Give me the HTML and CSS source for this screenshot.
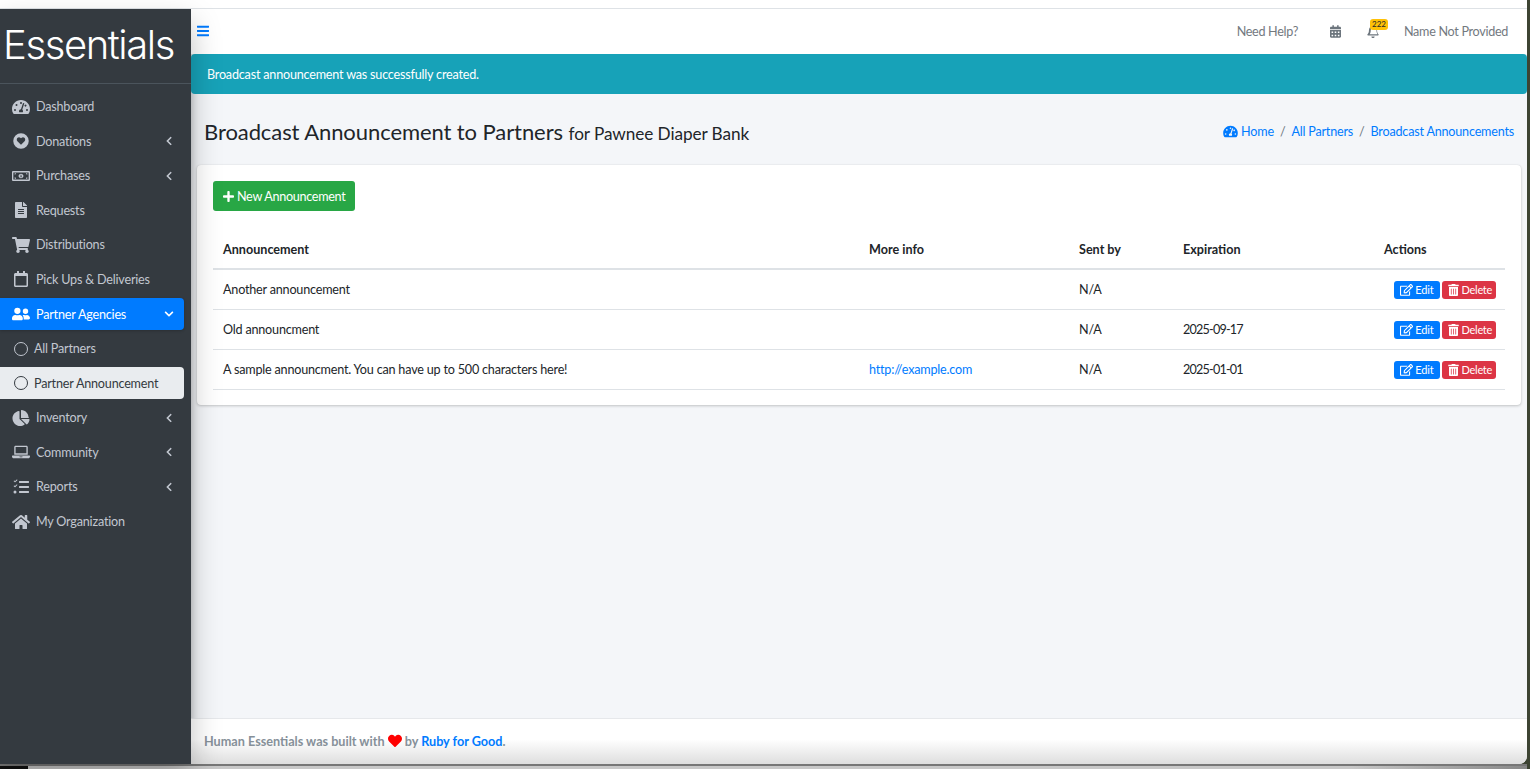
FILE: index.html
```html
<!DOCTYPE html>
<html lang="en">

<head>
  <meta charset="UTF-8">
  <title>Broadcast Announcements</title>
  <link rel="stylesheet" href="styles.css">
</head>

<body>
  <svg class="icon-defs" xmlns="http://www.w3.org/2000/svg">
    <symbol id="i-gauge" viewBox="0 0 576 512"><path d="M288 32C129 32 0 161 0 320c0 53 14 102 39 145 6 10 16 15 28 15h442c12 0 22-5 28-15 25-43 39-92 39-145C576 161 447 32 288 32zm0 64a32 32 0 1 1 0 64 32 32 0 0 1 0-64zM96 384a32 32 0 1 1 0-64 32 32 0 0 1 0 64zm48-160a32 32 0 1 1 0-64 32 32 0 0 1 0 64zm246-70-61 184c14 12 23 30 23 50 0 11-3 22-8 32H232c-5-10-8-21-8-32 0-35 29-64 63-64l61-184c4-12 17-18 29-14s19 16 15 28zm14 70a32 32 0 0 1 28-48 32 32 0 1 1-28 48zm76 160a32 32 0 1 1 0-64 32 32 0 0 1 0 64z" /></symbol>
    <symbol id="i-heart-circle" viewBox="0 0 512 512"><path fill-rule="evenodd" d="M256 8a248 248 0 1 0 0 496 248 248 0 0 0 0-496zm114 253L266 368c-6 6-15 6-20 0L142 261c-30-31-28-82 5-111 29-25 72-20 98 7l11 11 11-11c26-27 69-32 98-7 33 29 35 80 5 111z" /></symbol>
    <symbol id="i-money" viewBox="0 0 640 512"><path fill-rule="evenodd" d="M32 80h576c18 0 32 14 32 32v288c0 18-14 32-32 32H32c-18 0-32-14-32-32V112c0-18 14-32 32-32zm16 48v256h544V128H48zM320 176c50 0 88 36 88 80s-38 80-88 80-88-36-88-80 38-80 88-80zm-22 32v20h10v46h-14v22h56v-22h-14v-66zM96 160h48c0 26-22 48-48 48zm448 0v48c-26 0-48-22-48-48zM96 352v-48c26 0 48 22 48 48zm448 0h-48c0-26 22-48 48-48z" /></symbol>
    <symbol id="i-file" viewBox="0 0 384 512"><path fill-rule="evenodd" d="M224 136V0H24C11 0 0 11 0 24v464c0 13 11 24 24 24h336c13 0 24-11 24-24V160H248c-13 0-24-11-24-24zm64 236c0 7-5 12-12 12H108c-7 0-12-5-12-12v-8c0-7 5-12 12-12h168c7 0 12 5 12 12v8zm0-64c0 7-5 12-12 12H108c-7 0-12-5-12-12v-8c0-7 5-12 12-12h168c7 0 12 5 12 12v8zm0-72v8c0 7-5 12-12 12H108c-7 0-12-5-12-12v-8c0-7 5-12 12-12h168c7 0 12 5 12 12zm96-114v6H256V0h6c6 0 12 3 17 7l98 98c4 5 7 11 7 17z" /></symbol>
    <symbol id="i-cart" viewBox="0 0 576 512"><path d="M528.12 301.319l47.273-208C578.806 78.301 567.391 64 551.99 64H159.208l-9.166-44.81C147.758 8.021 137.93 0 126.529 0H24C10.745 0 0 10.745 0 24v16c0 13.255 10.745 24 24 24h69.883l70.248 343.435C147.325 417.1 136 435.222 136 456c0 30.928 25.072 56 56 56s56-25.072 56-56c0-15.674-6.447-29.835-16.824-40h209.647C430.447 426.165 424 440.326 424 456c0 30.928 25.072 56 56 56s56-25.072 56-56c0-22.172-12.888-41.332-31.579-50.405l5.517-24.276c3.413-15.018-8.002-29.319-23.403-29.319H218.117l-6.545-32h293.145c11.206 0 20.92-7.754 23.403-18.681z" /></symbol>
    <symbol id="i-calendar-o" viewBox="0 0 448 512"><path fill-rule="evenodd" d="M400 64h-48V12c0-7-5-12-12-12h-40c-7 0-12 5-12 12v52H160V12c0-7-5-12-12-12h-40c-7 0-12 5-12 12v52H48C21 64 0 85 0 112v352c0 27 21 48 48 48h352c27 0 48-21 48-48V112c0-27-21-48-48-48zm-6 400H54c-3 0-6-3-6-6V160h352v298c0 3-3 6-6 6z" /></symbol>
    <symbol id="i-users" viewBox="0 0 640 512"><path d="M192 256a112 112 0 1 0 0-224 112 112 0 0 0 0 224zm77 32h-8c-21 10-44 16-69 16s-48-6-69-16h-8C51 288 0 340 0 403v29c0 27 21 48 48 48h288c27 0 48-21 48-48v-29c0-63-51-115-115-115zm211-32a96 96 0 1 0 0-192 96 96 0 0 0 0 192zm48 32h-4c-14 5-29 8-44 8s-30-3-44-8h-4c-20 0-39 6-55 16 24 26 39 60 39 99v38c0 2 0 4-1 7h177c27 0 48-21 48-48 0-62-50-112-112-112z" /></symbol>
    <symbol id="i-pie" viewBox="0 0 544 512"><path d="M528 288H274l169 169c6 6 17 7 24 1 41-39 70-91 78-149 1-11-7-21-17-21zm-17-65C503 102 410 9 289 1c-9-1-17 7-17 16v239h239c9 0 17-8 16-17zM224 288V50c0-10-9-18-18-17C86 50-6 155 0 279c6 128 117 233 245 233 50 0 97-16 135-44 8-6 9-18 2-25z" /></symbol>
    <symbol id="i-laptop" viewBox="0 0 640 512"><path fill-rule="evenodd" d="M128 32h384c27 0 48 21 48 48v272H80V80c0-27 21-48 48-48zm0 48v224h384V80H128zM16 384h608c9 0 16 7 16 16v16c0 35-29 64-64 64H64c-35 0-64-29-64-64v-16c0-9 7-16 16-16zm248 32 12 24h88l12-24H264z" /></symbol>
    <symbol id="i-tasks" viewBox="0 0 512 512"><path d="M139 25l-10-10c-3-3-8-3-11 0L64 68 45 50c-3-3-8-3-11 0L23 61c-3 3-3 8 0 11l36 35c3 3 8 3 11 0l69-71c3-3 3-8 0-11zm0 159-10-10c-3-3-8-3-11 0l-54 53-19-18c-3-3-8-3-11 0l-11 11c-3 3-3 8 0 11l36 35c3 3 8 3 11 0l69-71c3-3 3-8 0-11zM64 368a48 48 0 1 0 0 96 48 48 0 0 0 0-96zm432 16H208c-9 0-16 7-16 16v32c0 9 7 16 16 16h288c9 0 16-7 16-16v-32c0-9-7-16-16-16zm0-320H208c-9 0-16 7-16 16v32c0 9 7 16 16 16h288c9 0 16-7 16-16V80c0-9-7-16-16-16zm0 160H208c-9 0-16 7-16 16v32c0 9 7 16 16 16h288c9 0 16-7 16-16v-32c0-9-7-16-16-16z" /></symbol>
    <symbol id="i-home" viewBox="0 0 576 512"><path d="M280.37 148.26L96 300.11V464a16 16 0 0 0 16 16l112.06-.29a16 16 0 0 0 15.92-16V368a16 16 0 0 1 16-16h64a16 16 0 0 1 16 16v95.64a16 16 0 0 0 16 16.05L464 480a16 16 0 0 0 16-16V300L295.67 148.26a12.19 12.19 0 0 0-15.3 0zM571.6 251.47L488 182.56V44.05a12 12 0 0 0-12-12h-56a12 12 0 0 0-12 12v72.61L318.47 43a48 48 0 0 0-61 0L4.34 251.47a12 12 0 0 0-1.6 16.9l25.5 31A12 12 0 0 0 45.15 301l235.22-193.74a12.19 12.19 0 0 1 15.3 0L530.9 301a12 12 0 0 0 16.9-1.6l25.5-31a12 12 0 0 0-1.7-16.93z" /></symbol>
    <symbol id="i-chevron-left" viewBox="0 0 320 512"><path d="M34 239 228 45c9-9 25-9 34 0l23 23c9 9 9 24 0 34L131 256l154 154c9 10 9 25 0 34l-23 23c-9 9-25 9-34 0L34 273c-9-9-9-25 0-34z" /></symbol>
    <symbol id="i-chevron-down" viewBox="0 0 448 512"><path d="M207 381 12 187c-9-10-9-25 0-34l23-23c9-9 24-9 34 0l155 154 155-154c10-9 25-9 34 0l23 23c9 9 9 24 0 34L241 381c-9 9-25 9-34 0z" /></symbol>
    <symbol id="i-bars" viewBox="0 0 448 512"><path d="M16 132h416c9 0 16-7 16-16V76c0-9-7-16-16-16H16C7 60 0 67 0 76v40c0 9 7 16 16 16zm0 160h416c9 0 16-7 16-16v-40c0-9-7-16-16-16H16c-9 0-16 7-16 16v40c0 9 7 16 16 16zm0 160h416c9 0 16-7 16-16v-40c0-9-7-16-16-16H16c-9 0-16 7-16 16v40c0 9 7 16 16 16z" /></symbol>
    <symbol id="i-calendar" viewBox="0 0 448 512"><path fill-rule="evenodd" d="M0 464c0 27 21 48 48 48h352c27 0 48-21 48-48V192H0v272zm320-196c0-7 5-12 12-12h40c7 0 12 5 12 12v40c0 7-5 12-12 12h-40c-7 0-12-5-12-12v-40zm0 128c0-7 5-12 12-12h40c7 0 12 5 12 12v40c0 7-5 12-12 12h-40c-7 0-12-5-12-12v-40zM192 268c0-7 5-12 12-12h40c7 0 12 5 12 12v40c0 7-5 12-12 12h-40c-7 0-12-5-12-12v-40zm0 128c0-7 5-12 12-12h40c7 0 12 5 12 12v40c0 7-5 12-12 12h-40c-7 0-12-5-12-12v-40zM64 268c0-7 5-12 12-12h40c7 0 12 5 12 12v40c0 7-5 12-12 12H76c-7 0-12-5-12-12v-40zm0 128c0-7 5-12 12-12h40c7 0 12 5 12 12v40c0 7-5 12-12 12H76c-7 0-12-5-12-12v-40zM400 64h-48V16c0-9-7-16-16-16h-32c-9 0-16 7-16 16v48H160V16c0-9-7-16-16-16h-32c-9 0-16 7-16 16v48H48C21 64 0 85 0 112v48h448v-48c0-27-21-48-48-48z" /></symbol>
    <symbol id="i-bell" viewBox="0 0 448 512"><path fill-rule="evenodd" d="M224 512c35 0 64-29 64-64H160c0 35 29 64 64 64zm215-150c-19-21-55-52-55-154 0-78-54-140-128-155V32a32 32 0 1 0-64 0v21C118 68 64 130 64 208c0 102-36 133-55 154-6 6-9 13-9 22 0 16 13 32 32 32h384c19 0 32-16 32-32 0-9-3-16-9-22zm-348 6c21-28 45-74 45-159v-1c0-62 50-112 112-112s112 50 112 112v1c0 85 24 131 45 159H91z" /></symbol>
    <symbol id="i-plus" viewBox="0 0 448 512"><path d="M416 208H272V64c0-18-14-32-32-32h-32c-18 0-32 14-32 32v144H32c-18 0-32 14-32 32v32c0 18 14 32 32 32h144v144c0 18 14 32 32 32h32c18 0 32-14 32-32V304h144c18 0 32-14 32-32v-32c0-18-14-32-32-32z" /></symbol>
    <symbol id="i-edit" viewBox="0 0 576 512"><path d="M402 339l32-32c5-5 14-2 14 6v151c0 27-21 48-48 48H48c-27 0-48-21-48-48V112c0-27 21-48 48-48h273c7 0 11 9 6 14l-32 32c-2 2-4 2-6 2H48v352h352V345c0-2 1-4 2-6zm157-202L296 400l-90 10c-26 3-48-19-45-45l10-90L434 12c23-23 60-23 83 0l42 42c23 23 23 60 0 83zm-99 31-57-57-182 182-7 64 64-7 182-182zm65-80-42-42c-4-4-11-4-15 0l-30 30 57 57 30-30c4-4 4-11 0-15z" /></symbol>
    <symbol id="i-trash" viewBox="0 0 448 512"><path fill-rule="evenodd" d="M32 464c0 27 21 48 48 48h288c27 0 48-21 48-48V128H32v336zm272-256a16 16 0 0 1 32 0v224a16 16 0 0 1-32 0V208zm-96 0a16 16 0 0 1 32 0v224a16 16 0 0 1-32 0V208zm-96 0a16 16 0 0 1 32 0v224a16 16 0 0 1-32 0V208zM432 32H312l-9-19c-4-8-12-13-22-13H167c-9 0-18 5-22 13l-9 19H16C7 32 0 39 0 48v32c0 9 7 16 16 16h416c9 0 16-7 16-16V48c0-9-7-16-16-16z" /></symbol>
    <symbol id="i-heart" viewBox="0 0 512 512"><path d="M462.3 62.6C407.5 15.9 326 24.3 275.7 76.2L256 96.5l-19.7-20.3C186.1 24.3 104.5 15.9 49.7 62.6c-62.8 53.6-66.1 149.8-9.9 207.9l193.5 199.8c12.5 12.9 32.8 12.9 45.3 0l193.5-199.8c56.3-58.1 53-154.3-9.8-207.9z" /></symbol>
  </svg>

  <div class="top-strip"></div>

  <div class="wrapper">
    <aside class="sidebar">
      <a href="#" class="brand">Essentials</a>
      <nav class="side-nav">
        <a href="#" class="side-link"><svg class="side-icon"><use href="#i-gauge" /></svg>Dashboard</a>
        <a href="#" class="side-link"><svg class="side-icon"><use href="#i-heart-circle" /></svg>Donations<svg class="caret"><use href="#i-chevron-left" /></svg></a>
        <a href="#" class="side-link"><svg class="side-icon"><use href="#i-money" /></svg>Purchases<svg class="caret"><use href="#i-chevron-left" /></svg></a>
        <a href="#" class="side-link"><svg class="side-icon"><use href="#i-file" /></svg>Requests</a>
        <a href="#" class="side-link"><svg class="side-icon"><use href="#i-cart" /></svg>Distributions</a>
        <a href="#" class="side-link"><svg class="side-icon"><use href="#i-calendar-o" /></svg>Pick Ups &amp; Deliveries</a>
        <a href="#" class="side-link active"><svg class="side-icon"><use href="#i-users" /></svg>Partner Agencies<svg class="caret"><use href="#i-chevron-down" /></svg></a>
        <a href="#" class="side-link sub"><span class="ring"></span>All Partners</a>
        <a href="#" class="side-link sub current"><span class="ring"></span>Partner Announcement</a>
        <a href="#" class="side-link"><svg class="side-icon"><use href="#i-pie" /></svg>Inventory<svg class="caret"><use href="#i-chevron-left" /></svg></a>
        <a href="#" class="side-link"><svg class="side-icon"><use href="#i-laptop" /></svg>Community<svg class="caret"><use href="#i-chevron-left" /></svg></a>
        <a href="#" class="side-link"><svg class="side-icon"><use href="#i-tasks" /></svg>Reports<svg class="caret"><use href="#i-chevron-left" /></svg></a>
        <a href="#" class="side-link"><svg class="side-icon"><use href="#i-home" /></svg>My Organization</a>
      </nav>
    </aside>

    <div class="content-wrapper">
      <header class="navbar">
        <a href="#" class="menu-toggle"><svg><use href="#i-bars" /></svg></a>
        <div class="navbar-right">
          <a href="#" class="nav-text">Need Help?</a>
          <a href="#" class="nav-icon"><svg><use href="#i-calendar" /></svg></a>
          <a href="#" class="nav-bell"><svg><use href="#i-bell" /></svg><span class="badge">222</span></a>
          <a href="#" class="nav-text">Name Not Provided</a>
        </div>
      </header>

      <div class="alert">Broadcast announcement was successfully created.</div>

      <div class="page-header">
        <h1>Broadcast Announcement to Partners <small>for Pawnee Diaper Bank</small></h1>
        <ol class="breadcrumb">
          <li><a href="#"><svg><use href="#i-gauge" /></svg> Home</a></li>
          <li><a href="#">All Partners</a></li>
          <li><a href="#">Broadcast Announcements</a></li>
        </ol>
      </div>

      <main class="content">
        <section class="card">
          <a href="#" class="btn-new"><svg><use href="#i-plus" /></svg>New Announcement</a>
          <table class="data-table">
            <colgroup>
              <col class="col-name">
              <col class="col-info">
              <col class="col-sent">
              <col class="col-exp">
              <col class="col-actions">
            </colgroup>
            <thead>
              <tr>
                <th>Announcement</th>
                <th>More info</th>
                <th>Sent by</th>
                <th>Expiration</th>
                <th>Actions</th>
              </tr>
            </thead>
            <tbody>
              <tr>
                <td>Another announcement</td>
                <td></td>
                <td>N/A</td>
                <td></td>
                <td class="actions">
                  <a href="#" class="btn-xs edit"><svg><use href="#i-edit" /></svg>Edit</a>
                  <a href="#" class="btn-xs delete"><svg><use href="#i-trash" /></svg>Delete</a>
                </td>
              </tr>
              <tr>
                <td>Old announcment</td>
                <td></td>
                <td>N/A</td>
                <td class="date">2025-09-17</td>
                <td class="actions">
                  <a href="#" class="btn-xs edit"><svg><use href="#i-edit" /></svg>Edit</a>
                  <a href="#" class="btn-xs delete"><svg><use href="#i-trash" /></svg>Delete</a>
                </td>
              </tr>
              <tr>
                <td>A sample announcment. You can have up to 500 characters here!</td>
                <td><a href="#">http://example.com</a></td>
                <td>N/A</td>
                <td class="date">2025-01-01</td>
                <td class="actions">
                  <a href="#" class="btn-xs edit"><svg><use href="#i-edit" /></svg>Edit</a>
                  <a href="#" class="btn-xs delete"><svg><use href="#i-trash" /></svg>Delete</a>
                </td>
              </tr>
            </tbody>
          </table>
        </section>
      </main>

      <footer class="footer">
        <strong>Human Essentials was built with <svg><use href="#i-heart" /></svg> by <a href="#">Ruby for Good</a>.</strong>
      </footer>
    </div>
  </div>

  <div class="bottom-strip"></div>
</body>

</html>
```

FILE: styles.css
```css
* {
  box-sizing: border-box;
}

html,
body {
  height: 100%;
}

body {
  margin: 0;
  height: 769px;
  overflow: hidden;
  padding-right: 3px;
  font-family: 'Lato', sans-serif;
  font-size: 12.6px;
  letter-spacing: -0.2px;
  color: #212529;
  background-color: #3d4433;
}

a {
  color: #007bff;
  text-decoration: none;
}

.icon-defs {
  display: none;
}

svg {
  fill: currentColor;
}

.top-strip {
  height: 9px;
  background-color: #fff;
  border-bottom: 1px solid #dee2e6;
}

.wrapper {
  display: flex;
  height: 755px;
}

/* sidebar */
.sidebar {
  width: 191px;
  flex-shrink: 0;
  background-color: #343a40;
  box-shadow: 0 14px 28px rgba(0, 0, 0, 0.25);
  position: relative;
}

.brand {
  display: block;
  height: 75px;
  padding-left: 3px;
  border-bottom: 1px solid #4b545c;
  color: #fff;
  font-family: 'Inter', sans-serif;
  font-size: 40px;
  font-weight: 300;
  letter-spacing: -1.4px;
  line-height: 72px;
}

.side-nav {
  display: flex;
  flex-direction: column;
  gap: 2.58px;
  padding-top: 6.6px;
  padding-right: 7px;
}

.side-link {
  display: flex;
  align-items: center;
  height: 32px;
  padding-left: 12px;
  padding-right: 10px;
  border-radius: 0 4px 4px 0;
  color: #c2c7d0;
}

.side-icon {
  width: 18px;
  height: 16px;
  margin-right: 6px;
  flex-shrink: 0;
}

.caret {
  width: 10px;
  height: 10px;
  margin-left: auto;
}

.side-link.active {
  background-color: #007bff;
  color: #fff;
  box-shadow: 0 1px 3px rgba(0, 0, 0, 0.2);
}

.side-link.sub {
  padding-left: 14px;
}

.side-link.current {
  background-color: #e9ecef;
  color: #343a40;
}

.ring {
  width: 14px;
  height: 14px;
  margin-right: 6px;
  border: 1.5px solid currentColor;
  border-radius: 50%;
}

/* main column */
.content-wrapper {
  flex: 1;
  display: flex;
  flex-direction: column;
  min-width: 0;
  background-color: #f4f6f9;
  border-bottom-right-radius: 8px;
  overflow: hidden;
  box-shadow: inset 6px 0 8px -6px rgba(0, 0, 0, 0.25);
}

.navbar {
  display: flex;
  justify-content: space-between;
  align-items: center;
  height: 45px;
  flex-shrink: 0;
  padding: 0 19px 1px 6px;
  background-color: #fff;
}

.menu-toggle svg {
  display: block;
  width: 12px;
  height: 14px;
}

.navbar-right {
  display: flex;
  align-items: center;
}

.nav-text {
  color: #73797f;
  letter-spacing: -0.3px;
}

.nav-icon {
  margin-left: 32px;
  color: #6c757d;
}

.nav-icon svg {
  display: block;
  width: 11px;
  height: 13px;
}

.nav-bell {
  position: relative;
  margin-left: 26px;
  margin-right: 25px;
  color: #6c757d;
}

.nav-bell svg {
  display: block;
  width: 12px;
  height: 13px;
}

.badge {
  position: absolute;
  top: -6px;
  left: 3px;
  width: 18px;
  height: 11px;
  border-radius: 3px;
  background-color: #ffc107;
  color: #212529;
  font-size: 8px;
  letter-spacing: 0;
  line-height: 11px;
  text-align: center;
}

.alert {
  height: 40px;
  flex-shrink: 0;
  padding: 0 16px;
  border-radius: 4px;
  background-color: #17a2b8;
  color: #fff;
  line-height: 41px;
}

.page-header {
  display: flex;
  justify-content: space-between;
  align-items: flex-start;
  height: 71px;
  flex-shrink: 0;
  padding: 24px 13px 0;
}

h1 {
  margin: 0;
  font-size: 22px;
  font-weight: 400;
  letter-spacing: -0.08px;
  line-height: 28px;
}

h1 small {
  font-size: 17.2px;
}

.breadcrumb {
  display: flex;
  margin: 0;
  padding: 6px 0 0;
  list-style: none;
}

.breadcrumb li + li::before {
  content: "/";
  padding: 0 6px;
  color: #6c757d;
}

.breadcrumb svg {
  width: 15px;
  height: 13px;
  vertical-align: -2px;
}

.content {
  flex: 1;
  padding: 0 6px;
}

.card {
  padding: 16px 16px 15px;
  border-radius: 4px;
  background-color: #fff;
  box-shadow: 0 0 1px rgba(0, 0, 0, 0.125), 0 1px 3px rgba(0, 0, 0, 0.2);
}

.btn-new {
  display: inline-flex;
  align-items: center;
  height: 30px;
  padding: 0 10px;
  border-radius: 3px;
  background-color: #28a745;
  color: #fff;
  letter-spacing: -0.3px;
}

.btn-new svg {
  width: 11px;
  height: 13px;
  margin-right: 3px;
}

.data-table {
  width: 100%;
  margin-top: 19px;
  border-collapse: collapse;
  table-layout: fixed;
}

.col-name {
  width: 646px;
}

.col-info {
  width: 210px;
}

.col-sent {
  width: 104px;
}

.col-exp {
  width: 201px;
}

.data-table th {
  height: 39px;
  padding: 0 10px;
  border-bottom: 2px solid #dee2e6;
  font-weight: 700;
  letter-spacing: 0;
  text-align: left;
}

.data-table td {
  height: 40px;
  padding: 0 10px;
  border-bottom: 1px solid #dee2e6;
}

.data-table td.date {
  letter-spacing: -0.8px;
}

.data-table td.actions {
  padding: 1px 9px 0 0;
  text-align: right;
  white-space: nowrap;
  font-size: 0;
}

.btn-xs {
  display: inline-flex;
  align-items: center;
  height: 18px;
  padding: 0 6px;
  border-radius: 3px;
  color: #fff;
  font-size: 11px;
  letter-spacing: -0.1px;
}

.btn-xs svg {
  width: 13px;
  height: 12px;
  margin-right: 2px;
}

.btn-xs.edit {
  background-color: #007bff;
}

.btn-xs.delete {
  margin-left: 2px;
  padding-right: 4px;
  background-color: #dc3545;
  letter-spacing: -0.3px;
}

.btn-xs.delete svg {
  width: 11px;
  margin-right: 3px;
}

.footer {
  height: 46px;
  flex-shrink: 0;
  padding: 0 13px;
  border-top: 1px solid #e6e8eb;
  background: linear-gradient(to bottom, #fff 45%, #dedede 100%);
  color: #869099;
  font-size: 12.65px;
  letter-spacing: 0;
  line-height: 45px;
}

.footer svg {
  width: 14px;
  height: 14px;
  color: #f00;
  vertical-align: -2px;
}

.bottom-strip {
  height: 5px;
  border-top: 2px solid #777;
  background: linear-gradient(to right, #111 28px, #c8c8c8 28px, #c8c8c8 1350px, #888);
}
```
